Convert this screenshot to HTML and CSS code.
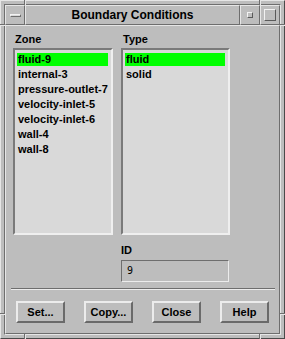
FILE: index.html
```html
<!DOCTYPE html>
<html>
<head>
<meta charset="utf-8">
<link rel="stylesheet" href="styles.css">
</head>
<body>
<div class="window">
  <div class="frame">
    <div class="titlebar">
      <div class="tbtn"><span class="menu-bar"></span></div>
      <div class="title">Boundary Conditions</div>
      <div class="tbtn"><span class="mini"></span></div>
      <div class="tbtn"><span class="maxi"></span></div>
    </div>
    <div class="client">
      <div class="grid">
        <div class="label">Zone</div>
        <div class="label">Type</div>
        <ul class="list">
          <li class="item selected">fluid-9</li>
          <li class="item">internal-3</li>
          <li class="item">pressure-outlet-7</li>
          <li class="item">velocity-inlet-5</li>
          <li class="item">velocity-inlet-6</li>
          <li class="item">wall-4</li>
          <li class="item">wall-8</li>
        </ul>
        <ul class="list">
          <li class="item selected">fluid</li>
          <li class="item">solid</li>
        </ul>
        <div class="idgroup">
          <div class="label id-label">ID</div>
          <div class="field">9</div>
        </div>
      </div>
      <div class="sep"></div>
      <div class="buttons">
        <div class="btn">Set...</div>
        <div class="btn">Copy...</div>
        <div class="btn">Close</div>
        <div class="btn">Help</div>
      </div>
    </div>
  </div>
  <span class="notch nh nl1"></span>
  <span class="notch nh nl2"></span>
  <span class="notch nh nr1"></span>
  <span class="notch nh nr2"></span>
  <span class="notch nv nt1"></span>
  <span class="notch nv nt2"></span>
  <span class="notch nv nb1"></span>
  <span class="notch nv nb2"></span>
</div>
</body>
</html>
```

FILE: styles.css
```css
html, body {
  margin: 0;
  padding: 0;
  background: #bdbdbd;
}

.window {
  position: relative;
  width: 285px;
  height: 339px;
  box-sizing: border-box;
  background: #bdbdbd;
  border: 1px solid;
  border-color: #e6e6e6 #4a4a4a #4a4a4a #e6e6e6;
  padding: 3px;
  font-family: "Liberation Sans", Arial, sans-serif;
  color: #000;
}

.frame {
  height: 100%;
  box-sizing: border-box;
  border: 1px solid;
  border-color: #6e6e6e #e6e6e6 #e6e6e6 #6e6e6e;
  display: flex;
  flex-direction: column;
}

.titlebar {
  height: 20px;
  display: flex;
}

.tbtn, .title {
  box-sizing: border-box;
  height: 20px;
  border: 1px solid;
  border-color: #e6e6e6 #6e6e6e #6e6e6e #e6e6e6;
  display: flex;
  align-items: center;
  justify-content: center;
}

.tbtn {
  width: 20px;
}

.title {
  flex: 1;
  font-weight: bold;
  font-size: 12px;
  line-height: 18px;
}

.menu-bar {
  width: 11px;
  height: 3px;
  box-sizing: border-box;
  border: 1px solid;
  border-color: #f2f2f2 #6e6e6e #6e6e6e #f2f2f2;
  background: #d8d8d8;
}

.mini {
  width: 6px;
  height: 6px;
  box-sizing: border-box;
  border: 1px solid;
  border-color: #f2f2f2 #5a5a5a #5a5a5a #f2f2f2;
}

.maxi {
  width: 12px;
  height: 12px;
  box-sizing: border-box;
  border: 1px solid;
  border-color: #f2f2f2 #5a5a5a #5a5a5a #f2f2f2;
}

.client {
  flex: 1;
  box-sizing: border-box;
  border: 1px solid;
  border-color: #e6e6e6 #6e6e6e #6e6e6e #e6e6e6;
  display: flex;
  flex-direction: column;
}

.grid {
  display: grid;
  grid-template-columns: 100px 109px;
  column-gap: 8px;
  padding: 7px 0 0 7px;
}

.label {
  height: 13px;
  line-height: 13px;
  font-size: 11px;
  font-weight: bold;
  padding-left: 2px;
}

.list {
  margin: 2px 0 0 0;
  height: 187px;
  box-sizing: border-box;
  list-style: none;
  padding: 3px 3px 0 2px;
  background: #d9d9d9;
  border: 2px solid;
  border-color: #7a7a7a #efefef #efefef #7a7a7a;
}

.item {
  height: 13px;
  line-height: 13px;
  margin-bottom: 2px;
  padding-left: 1px;
  font-size: 11px;
  font-weight: bold;
  white-space: nowrap;
}

.item.selected {
  background: #00ff00;
}

.idgroup {
  grid-column: 2;
  margin-top: 9px;
}

.id-label {
  padding-left: 0;
}

.field {
  margin-top: 3px;
  width: 108px;
  height: 22px;
  box-sizing: border-box;
  border: 1px solid;
  border-color: #6e6e6e #ececec #ececec #6e6e6e;
  padding-left: 5px;
  font-family: "DejaVu Sans Mono", "Liberation Mono", monospace;
  font-size: 10px;
  line-height: 20px;
}

.sep {
  margin: 6px 4px 0 5px;
  height: 0;
  border-top: 1px solid #6e6e6e;
  border-bottom: 1px solid #ececec;
}

.buttons {
  margin-top: 11px;
  padding-left: 10px;
  display: flex;
  gap: 19px;
}

.btn {
  width: 49px;
  height: 22px;
  box-sizing: border-box;
  border: 2px solid;
  border-color: #ececec #6a6a6a #6a6a6a #ececec;
  display: flex;
  align-items: center;
  justify-content: center;
  font-size: 11px;
  font-weight: bold;
}

.notch {
  position: absolute;
  box-sizing: border-box;
}

.nh {
  width: 5px;
  height: 2px;
  border-top: 1px solid #6e6e6e;
  border-bottom: 1px solid #e6e6e6;
}

.nv {
  width: 2px;
  height: 5px;
  border-left: 1px solid #6e6e6e;
  border-right: 1px solid #e6e6e6;
}

.nl1 { left: -1px; top: 23px; }
.nl2 { left: -1px; top: 312px; }
.nr1 { right: -1px; top: 23px; }
.nr2 { right: -1px; top: 312px; }
.nt1 { top: -1px; left: 23px; }
.nt2 { top: -1px; left: 258px; }
.nb1 { bottom: -1px; left: 23px; }
.nb2 { bottom: -1px; left: 258px; }
```
